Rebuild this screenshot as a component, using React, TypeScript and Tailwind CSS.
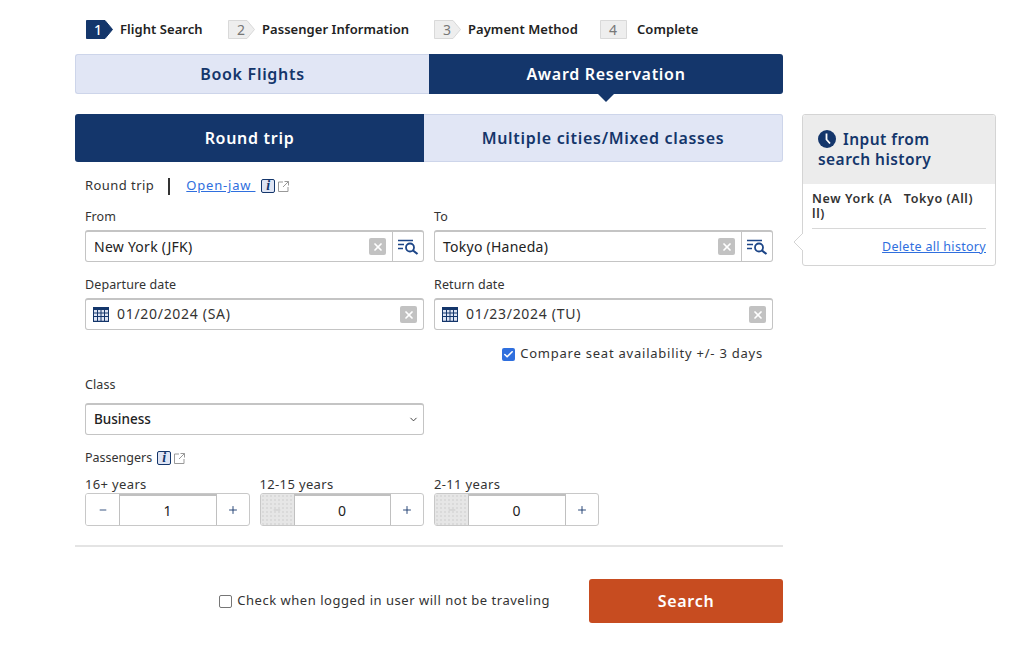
import { Check, ChevronDown, Minus, Plus, X } from "lucide-react";

const steps = [
  { n: "1", label: "Flight Search", active: true, w: "w-[142px]" },
  { n: "2", label: "Passenger Information", active: false, w: "w-[206px]" },
  { n: "3", label: "Payment Method", active: false, w: "w-[166px]" },
  { n: "4", label: "Complete", active: false, w: "w-[110px]", last: true },
];

function StepBadge({ n, active, last }: { n: string; active: boolean; last?: boolean }) {
  const points = last ? "0.5,0.5 26.5,0.5 26.5,18.5 0.5,18.5" : "0.5,0.5 19,0.5 26.5,9.5 19,18.5 0.5,18.5";
  return (
    <div className="relative h-[19px] w-[27px] shrink-0">
      <svg width="27" height="19" viewBox="0 0 27 19" className="block">
        <polygon
          points={points}
          fill={active ? "#14366b" : "#eeeeee"}
          stroke={active ? "#14366b" : "#d9d9d9"}
        />
      </svg>
      <span
        className={`absolute top-0 text-[14px] leading-[19px] ${active ? "left-[8px] font-medium text-white" : "left-[9px] text-[#777777]"}`}
      >
        {n}
      </span>
    </div>
  );
}

function InfoIcons() {
  return (
    <span className="flex items-center gap-[3px]">
      <span className="flex h-[14px] w-[14px] items-center justify-center rounded-[2px] border-[1.5px] border-[#14366b] bg-[#dfe5f4] font-['Liberation_Serif',serif] text-[14px] leading-none font-bold text-[#14366b] italic">
        i
      </span>
      <svg width="11" height="11" viewBox="0 0 11 11" fill="none" stroke="#999999" strokeWidth="1">
        <path d="M5 1H.5v9.5H10V6M6.5 .5h4v4M10.5 .5L5 6" />
      </svg>
    </span>
  );
}

function ClearButton() {
  return (
    <span className="flex h-[17px] w-[17px] shrink-0 items-center justify-center rounded-[2px] bg-[#c2c2c2]">
      <X size={12} color="#ffffff" strokeWidth={3.5} />
    </span>
  );
}

function CalendarIcon() {
  return (
    <svg width="16" height="15" viewBox="0 0 16 15" className="shrink-0">
      <rect x="0" y="0" width="16" height="15" fill="#14366b" />
      <path
        d="M1 3h3v2.5H1zM5 3h2.5v2.5H5zM8.5 3H11v2.5H8.5zM12 3h3v2.5h-3zM1 6.5h3V9H1zM5 6.5h2.5V9H5zM8.5 6.5H11V9H8.5zM12 6.5h3V9h-3zM1 10h3v3.8H1zM5 10h2.5v3.8H5zM8.5 10H11v3.8H8.5zM12 10h3v3.8h-3z"
        fill="#dfe5f4"
      />
    </svg>
  );
}

function SearchListIcon() {
  return (
    <svg width="21" height="16" viewBox="0 0 21 16" fill="none" stroke="#1c4587" strokeWidth="1.6">
      <path d="M0 1.5h15M0 5.5h6M0 9.5h5" />
      <circle cx="12" cy="8.5" r="4" strokeWidth="1.8" />
      <path d="M15 11.5l4.5 3.5" strokeWidth="2.2" />
    </svg>
  );
}

function FieldLabel({ children }: { children: string }) {
  return <div className="text-[12.5px] leading-[18px] tracking-[0.1px] text-[#333333]">{children}</div>;
}

function AirportField({ label, value }: { label: string; value: string }) {
  return (
    <div className="w-[339px]">
      <FieldLabel>{label}</FieldLabel>
      <div className="mt-[4px] flex h-[32px] rounded-[3px] border border-[#c4c4c4] border-t-2 bg-white">
        <div className="flex min-w-0 flex-1 items-center justify-between pl-2 pr-[6px]">
          <span className="text-[14px] tracking-[0.25px] text-[#222222]">{value}</span>
          <ClearButton />
        </div>
        <div className="flex w-[31px] items-center justify-center border-l border-[#c4c4c4]">
          <SearchListIcon />
        </div>
      </div>
    </div>
  );
}

function DateField({ label, value }: { label: string; value: string }) {
  return (
    <div className="w-[339px]">
      <FieldLabel>{label}</FieldLabel>
      <div className="mt-[4px] flex h-[32px] items-center rounded-[3px] border border-[#c4c4c4] border-t-2 bg-white pl-[7px] pr-[6px]">
        <CalendarIcon />
        <span className="ml-2 flex-1 pb-[2px] text-[14px] tracking-[0.7px] text-[#333333]">{value}</span>
        <ClearButton />
      </div>
    </div>
  );
}

function Stepper({ label, value, disabled }: { label: string; value: string; disabled?: boolean }) {
  return (
    <div className="w-[164.5px]">
      <div className="text-[13px] leading-[16px] text-[#333333]">{label}</div>
      <div className="mt-[1px] flex h-[33px] rounded-[3px] border border-[#c8c8c8] bg-white">
        <div
          className={`flex w-[33px] items-center justify-center rounded-l-[2px] ${disabled ? "bg-[#e6e6e6] bg-[radial-gradient(#dadada_1px,transparent_1px)] bg-[length:4px_4px]" : "bg-white"}`}
        >
          <Minus size={10} strokeWidth={2} color={disabled ? "#c4c4c4" : "#14366b"} />
        </div>
        <div className="flex flex-1 items-center justify-center border-x border-t-2 border-[#c0c0c0] text-[14px] text-[#222222]">
          {value}
        </div>
        <div className="flex w-[32px] items-center justify-center">
          <Plus size={12} strokeWidth={1.8} color="#14366b" />
        </div>
      </div>
    </div>
  );
}

export default function App() {
  return (
    <div className="flex h-[655px] w-[1024px] overflow-hidden bg-white pl-[75px] pt-5 font-['Noto_Sans',sans-serif] tracking-[0.35px] text-[#222222]">
      <main className="w-[708px] shrink-0">
        <ol className="flex pl-[11px]">
          {steps.map((s) => (
            <li key={s.n} className={`flex items-center ${s.w}`}>
              <StepBadge n={s.n} active={s.active} last={s.last} />
              <span className={`text-[13px] leading-[19px] font-semibold tracking-[0.05px] text-[#222222] ${s.last ? "ml-[10px]" : "ml-[7px]"}`}>
                {s.label}
              </span>
            </li>
          ))}
        </ol>

        <div className="relative mt-[15px] flex h-[40px] text-[16px] font-semibold tracking-[0.7px]">
          <div className="flex w-[354px] items-center justify-center rounded-l-[3px] border border-r-0 border-[#cdd5ea] bg-[#e1e6f5] text-[#14366b]">
            Book Flights
          </div>
          <div className="flex flex-1 items-center justify-center rounded-r-[3px] bg-[#14366b] text-white">
            Award Reservation
          </div>
          <span className="absolute left-[523px] top-[40px] h-0 w-0 border-x-[8px] border-t-[8px] border-x-transparent border-t-[#14366b]" />
        </div>

        <div className="mt-[20px] flex h-[48px] text-[16px] font-semibold tracking-[0.7px]">
          <div className="flex w-[349px] items-center justify-center rounded-l-[3px] bg-[#14366b] text-white">
            Round trip
          </div>
          <div className="flex flex-1 items-center justify-center rounded-r-[3px] border border-l-0 border-[#cdd5ea] bg-[#e1e6f5] text-[#14366b]">
            Multiple cities/Mixed classes
          </div>
        </div>

        <div className="px-[10px]">
          <div className="mt-[15px] flex h-[18px] items-center text-[13px] tracking-[0.45px] text-[#333333]">
            <span>Round trip</span>
            <span className="ml-[14px] h-[17px] w-[2px] bg-[#333333]" />
            <a className="ml-[16px] text-[#2f6fde] underline tracking-[0.8px]">Open-jaw&nbsp;</a>
            <span className="ml-[6px]">
              <InfoIcons />
            </span>
          </div>

          <div className="mt-[13px] flex gap-[10px]">
            <AirportField label="From" value="New York (JFK)" />
            <AirportField label="To" value="Tokyo (Haneda)" />
          </div>

          <div className="mt-[14px] flex gap-[10px]">
            <DateField label="Departure date" value="01/20/2024 (SA)" />
            <DateField label="Return date" value="01/23/2024 (TU)" />
          </div>

          <label className="mt-[15px] flex h-[18px] items-center justify-end pr-[10px] text-[13px] tracking-[0.77px] text-[#333333]">
            <span className="mr-[5px] flex h-[13px] w-[13px] items-center justify-center rounded-[2px] bg-[#2f6fde]">
              <Check size={11} color="#ffffff" strokeWidth={3.5} />
            </span>
            Compare seat availability +/- 3 days
          </label>

          <div className="mt-[13px]">
            <FieldLabel>Class</FieldLabel>
          </div>
          <div className="mt-[9px] flex h-[32px] w-[339px] items-center justify-between rounded-[3px] border border-[#c4c4c4] border-t-2 bg-white pl-2 pr-[4px]">
            <span className="text-[13.5px] font-medium tracking-[0px] text-[#222222]">Business</span>
            <ChevronDown size={11} color="#333333" strokeWidth={2} />
          </div>

          <div className="mt-[14px] flex h-[18px] items-center text-[12.5px] tracking-[0px] text-[#333333]">
            <span className="mr-[5px]">Passengers</span>
            <InfoIcons />
          </div>

          <div className="mt-[9px] flex gap-[10px]">
            <Stepper label="16+ years" value="1" />
            <Stepper label="12-15 years" value="0" disabled />
            <Stepper label="2-11 years" value="0" disabled />
          </div>
        </div>

        <div className="mt-[19px] h-[2px] bg-[#e4e4e4]" />

        <div className="mt-[32px] flex items-center justify-end">
          <label className="flex items-center text-[13px] tracking-[0.52px] text-[#333333]">
            <span className="mr-[5px] h-[13px] w-[13px] rounded-[2px] border border-[#767676] bg-white" />
            Check when logged in user will not be traveling
          </label>
          <button className="ml-[39px] h-[44px] w-[194px] rounded-[3px] bg-[#c74c20] text-[16px] font-semibold tracking-[0.7px] text-white">
            Search
          </button>
        </div>
      </main>

      <aside className="relative ml-[19px] mt-[94px] h-[152px] w-[194px] shrink-0 rounded-[3px] border border-[#d4d4d4] bg-white">
        <div className="rounded-t-[3px] bg-[#ececec] px-[15px] pb-[15px] pt-[14px] text-[15.5px] leading-[20px] font-semibold tracking-[0.45px] text-[#14366b]">
          <span className="mr-[7px] inline-block h-[18px] w-[18px] align-[-3px]">
            <svg width="18" height="18" viewBox="0 0 18 18">
              <circle cx="9" cy="9" r="9" fill="#14366b" />
              <path d="M8.5 3.5V9.5L12 13.5" fill="none" stroke="#ffffff" strokeWidth="1.8" />
            </svg>
          </span>
          Input from
          <br />
          search history
        </div>
        <div className="px-[9px] pt-[7px]">
          <div className="border-b border-[#d8d8d8] pb-[7px] text-[12.5px] leading-[15px] font-semibold tracking-[0.6px] text-[#333333]">
            New York (A&nbsp;&nbsp;&nbsp;Tokyo (All)
            <br />
            ll)
          </div>
          <div className="mt-[10px] text-right text-[12.5px] leading-[16px] tracking-[0.3px] text-[#2f6fde] underline">
            Delete all history
          </div>
        </div>
        <svg width="10" height="18" viewBox="0 0 10 18" className="absolute left-[-10px] top-[118px]">
          <path d="M10 0L1 9l9 9" fill="#ffffff" stroke="#d4d4d4" />
        </svg>
      </aside>
    </div>
  );
}
